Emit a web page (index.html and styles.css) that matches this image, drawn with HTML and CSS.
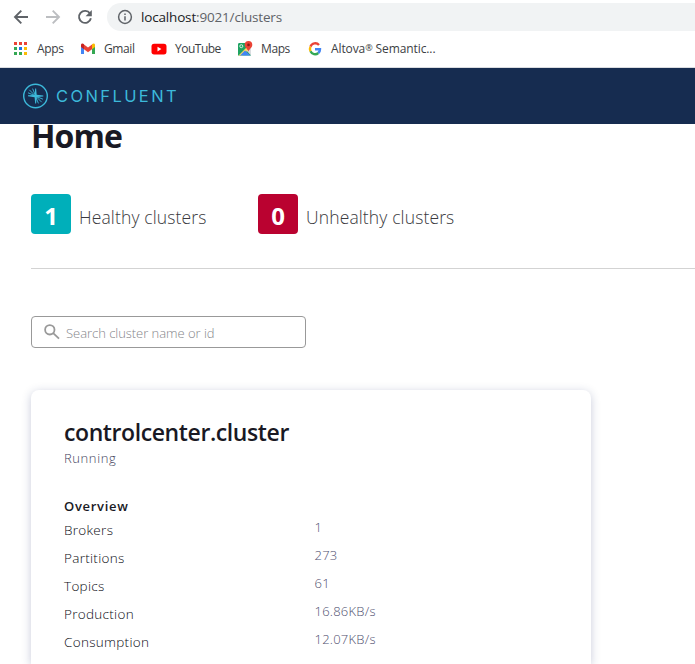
FILE: index.html
```html
<!DOCTYPE html>
<html lang="en">
<head>
<meta charset="utf-8">
<title>Control Center</title>
<link rel="stylesheet" href="styles.css">
</head>
<body>
<div class="toolbar">
  <svg class="nav" width="16" height="16" viewBox="0 0 16 16"><path d="M15 8H2M8.3 1.7L2 8l6.3 6.3"/></svg>
  <svg class="nav disabled" width="16" height="16" viewBox="0 0 16 16"><path d="M1 8h13M7.7 1.7L14 8l-6.3 6.3"/></svg>
  <svg class="nav" width="16" height="16" viewBox="0 0 16 16"><path d="M13 4.5A6 6 0 1 0 13.9 9.2"/><path class="solid" d="M14.8 1v6.2H8.6z"/></svg>
  <div class="address">
    <svg class="info" width="16" height="16" viewBox="0 0 16 16"><circle cx="8" cy="8" r="6.4"/><path d="M8 7.2v4.3M8 4.4v1.5"/></svg>
    <span class="url"><b>localhost</b>:9021/clusters</span>
  </div>
</div>
<nav class="bookmarks">
  <a class="bookmark apps">
    <svg width="14" height="14" viewBox="0 0 14 14"><path fill="#ea4335" d="M0 0h3v3H0zM5 0h3v3H5zM10 0h3v3h-3z"/><path fill="#34a853" d="M0 5h3v3H0zM0 10h3v3H0zM5 10h3v3H5z"/><path fill="#1a73e8" d="M5 5h3v3H5z"/><path fill="#fbbc04" d="M10 5h3v3h-3zM10 10h3v3h-3z"/></svg>
    <span>Apps</span>
  </a>
  <a class="bookmark gmail">
    <svg width="16" height="16" viewBox="0 0 16 16"><path fill="#4285f4" d="M1 4v9h3V6.5z"/><path fill="#34a853" d="M12 6.5V13h3V4z"/><path fill="#fbbc04" d="M12 4v4.300l3-2.300V4c0-1.600-1.700-2-3-.8z"/><path fill="#c5221f" d="M1 4v2l3 2.300V3.200C2.700 2 1 2.500 1 4z"/><path fill="#ea4335" d="M4 3.500L8 6.500l4-3v4.800l-4 3-4-3z"/></svg>
    <span>Gmail</span>
  </a>
  <a class="bookmark youtube">
    <svg width="16" height="16" viewBox="0 0 16 16"><rect x=".5" y="2.800" width="15" height="10.600" rx="2.600" fill="#f00"/><path fill="#fff" d="M6.500 5.800v4.600L10.400 8.100z"/></svg>
    <span>YouTube</span>
  </a>
  <a class="bookmark maps">
    <svg width="16" height="16" viewBox="0 0 16 16"><path fill="#1ea362" d="M1 3.500C1 2.500 1.500 2 2.500 2H14v12.500H1z"/><path fill="#dadce0" d="M13 6l1 1v7.500L9 9z"/><path fill="#fdd663" d="M1.500 14.500L10.500 5.500l2 2-7 7z"/><path fill="#4285f4" d="M3 14.500L8 9.500l5.500 5z"/><circle cx="4.300" cy="5.200" r="1.500" fill="none" stroke="#d8f0e2"/><path fill="#ea4335" d="M11.500 11c0-2.500-3.800-4-3.800-7.200a3.800 3.800 0 0 1 7.600 0c0 3.200-3.800 4.700-3.800 7.200z"/><circle cx="11.500" cy="3.900" r="1.300" fill="#8b1d18"/></svg>
    <span>Maps</span>
  </a>
  <a class="bookmark altova">
    <svg width="16" height="16" viewBox="0 0 16 16" fill="none" stroke-width="2.400"><path stroke="#ea4335" d="M12 4A5 5 0 0 0 3.500 5.700"/><path stroke="#fbbc04" d="M3.500 5.700a5 5 0 0 0 0 4.600"/><path stroke="#34a853" d="M3.500 10.300A5 5 0 0 0 11.300 12"/><path stroke="#4285f4" d="M11.300 12A5 5 0 0 0 13 8.200H8"/></svg>
    <span>Altova<small>®</small> Semantic...</span>
  </a>
</nav>
<header class="brandbar">
  <svg class="logo" width="25" height="26" viewBox="0 0 25 26"><circle cx="12.500" cy="13" r="11.800" stroke-width="1.400"/><path d="M11.500 12L6.300 6.800M11 12.200L5 9.800M12 11.500L9.600 5.600M13.500 14l5.200 5.200M14 13.800l6 2.400M13 14.500l2.400 5.900"/><path class="core" d="M12.200 5.400h.9l.6 6.400 6.600.8v.9l-6.600.4-.6 6.600h-.9l-.6-6.300-6.600-1v-.9l6.600-.4z"/></svg>
  <span class="wordmark">CONFLUENT</span>
</header>
<main>
  <h1>Home</h1>
  <div class="summary">
    <div class="stat"><span class="count healthy">1</span><span class="label">Healthy clusters</span></div>
    <div class="stat"><span class="count unhealthy">0</span><span class="label">Unhealthy clusters</span></div>
  </div>
  <label class="search">
    <svg width="16" height="16" viewBox="0 0 16 16"><circle cx="5.800" cy="5.800" r="4.700"/><path d="M9.200 9.200l5.800 5.500"/></svg>
    <span>Search cluster name or id</span>
  </label>
  <section class="card">
    <h2>controlcenter.cluster</h2>
    <p class="state">Running</p>
    <h3>Overview</h3>
    <dl>
      <div><dt>Brokers</dt><dd>1</dd></div>
      <div><dt>Partitions</dt><dd>273</dd></div>
      <div><dt>Topics</dt><dd>61</dd></div>
      <div><dt>Production</dt><dd>16.86KB/s</dd></div>
      <div><dt>Consumption</dt><dd>12.07KB/s</dd></div>
    </dl>
  </section>
</main>
</body>
</html>
```
FILE: styles.css
```css
* { box-sizing: border-box; }
html, body { height: 100%; overflow: hidden; }
body {
  margin: 0;
  background: #fff;
  color: #191924;
  font-family: "Open Sans", "Noto Sans", sans-serif;
  display: flex;
  flex-direction: column;
}
svg { flex: none; display: block; }
h1, h2, h3, p, dl, dd { margin: 0; }
span, h1, h2, h3, p, dt, dd { white-space: nowrap; }

.toolbar {
  flex: none;
  height: 34px;
  padding: 0 0 0 13px;
  display: flex;
  align-items: center;
  gap: 16px;
}
.nav { fill: none; stroke: #5f6368; stroke-width: 1.9; }
.nav .solid { fill: #5f6368; stroke: none; }
.disabled { stroke: #bcbec1; }
.address {
  flex: 1;
  align-self: flex-start;
  height: 28px;
  margin: 3px 0 0 -2px;
  padding-left: 10px;
  border-radius: 14px 0 0 14px;
  background: #f1f3f4;
  display: flex;
  align-items: center;
  gap: 8px;
}
.info { fill: none; stroke: #5f6368; stroke-width: 1.5; }
.url { font-size: 13.5px; line-height: 20px; color: #5f6368; letter-spacing: -.17px; }
.url b { font-weight: 400; color: #202124; }

.bookmarks {
  flex: none;
  height: 34px;
  padding: 0 0 4px 14px;
  border-bottom: 1px solid #dadce0;
  display: flex;
  align-items: center;
}
.bookmark {
  display: flex;
  align-items: center;
  gap: 8px;
  font-size: 12px;
  line-height: 16px;
  color: #3c4043;
}
.bookmark small { font-size: 9px; line-height: 1; vertical-align: 2px; }
.apps { width: 66px; gap: 9px; letter-spacing: -.3px; }
.gmail { width: 71px; letter-spacing: -.4px; }
.youtube { width: 86px; letter-spacing: -.5px; }
.maps { width: 70px; letter-spacing: -.4px; }
.altova { letter-spacing: -.1px; }

.brandbar {
  position: relative;
  z-index: 1;
  flex: none;
  height: 56px;
  padding-left: 23px;
  background: #162c50;
  display: flex;
  align-items: center;
  gap: 8px;
}
.logo { fill: none; stroke: #3cb9da; stroke-width: .9; }
.logo .core { fill: #3cb9da; stroke: none; }
.wordmark { font: 400 16.5px/24px Inter, sans-serif; color: #3cb9da; letter-spacing: 2.4px; }

main { flex: none; padding-left: 31px; margin-top: -10px; }
h1 { font-size: 32px; line-height: 44px; font-weight: 700; letter-spacing: -.9px; }
.summary {
  height: 111px;
  padding-top: 36px;
  border-bottom: 1px solid #d3d3d3;
  display: flex;
}
.stat { width: 227px; display: flex; gap: 8px; }
.count {
  width: 40px;
  height: 40px;
  border-radius: 4px;
  color: #fff;
  font-size: 24px;
  font-weight: 700;
  line-height: 43px;
  text-align: center;
}
.healthy { background: #00afba; }
.unhealthy { background: #ba0230; }
.label { font-size: 17.5px; font-weight: 300; line-height: 46px; color: #3a3a40; letter-spacing: .13px; }
.search {
  width: 275px;
  height: 32px;
  margin-top: 47px;
  padding: 0 12px;
  border: 1px solid #999;
  border-radius: 4px;
  display: flex;
  align-items: center;
  gap: 6px;
}
.search svg { fill: none; stroke: #999; stroke-width: 1.8; }
.search span { padding-top: 2px; font-size: 13px; font-weight: 300; color: #85858a; letter-spacing: -.04px; }
.card {
  width: 560px;
  height: 274px;
  margin-top: 42px;
  padding: 26px 33px 0;
  border-radius: 8px 8px 0 0;
  box-shadow: 0 2px 10px rgba(36, 50, 110, .25);
}
h2 { font-size: 23px; line-height: 32px; font-weight: 600; letter-spacing: -.4px; }
.state { font-size: 13px; line-height: 20px; font-weight: 300; color: #45455e; letter-spacing: .6px; }
h3 { margin-top: 28px; font-size: 13px; line-height: 20px; font-weight: 600; letter-spacing: .7px; }
dl div { display: flex; height: 28px; }
dt { width: 250.5px; padding-top: 4px; font-size: 13.5px; line-height: 20px; font-weight: 300; color: #0c0c14; letter-spacing: .3px; }
dd { font-size: 13px; line-height: 22px; font-weight: 300; color: #50506f; letter-spacing: .25px; }
```
